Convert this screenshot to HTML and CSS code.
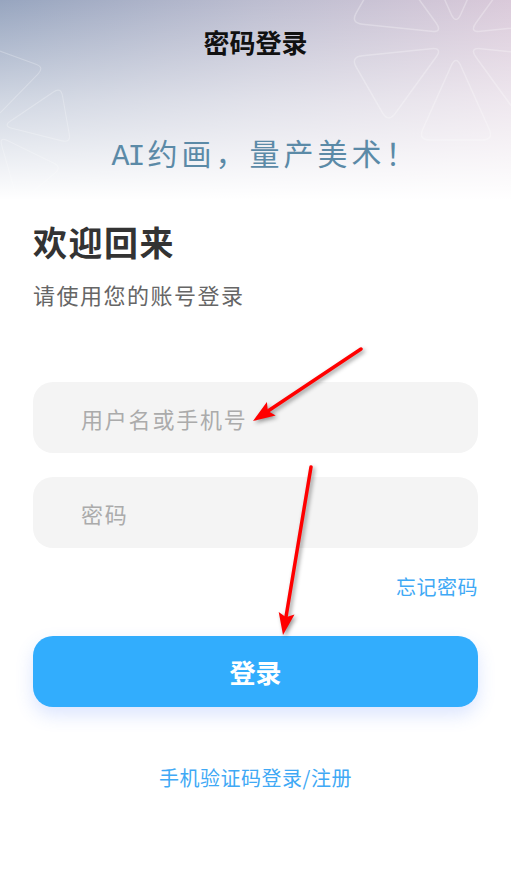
FILE: index.html
```html
<!DOCTYPE html>
<html lang="zh-CN">
<head>
    <meta charset="UTF-8">
    <meta name="viewport" content="width=device-width, initial-scale=1.0">
    <title>密码登录</title>
    <link rel="stylesheet" href="styles.css">
</head>
<body>
    <div class="page">
        <header class="hero">
            <svg class="deco" width="511" height="200" viewBox="0 0 511 200">
                <defs>
                    <path id="petal" d="M4.9 26 L33.1 89 Q38 100 26 100 L-26 100 Q-38 100 -33.1 89 L-4.9 26 Q0 15 4.9 26 Z"/>
                </defs>
                <g class="flower" transform="translate(456 40)">
                    <use href="#petal"/>
                    <use href="#petal" transform="rotate(60)"/>
                    <use href="#petal" transform="rotate(120)"/>
                    <use href="#petal" transform="rotate(180)"/>
                    <use href="#petal" transform="rotate(240)"/>
                    <use href="#petal" transform="rotate(300)"/>
                </g>
                <g class="flower faint" transform="translate(-8 128) scale(0.75) rotate(20)">
                    <use href="#petal"/>
                    <use href="#petal" transform="rotate(60)"/>
                    <use href="#petal" transform="rotate(120)"/>
                    <use href="#petal" transform="rotate(180)"/>
                    <use href="#petal" transform="rotate(240)"/>
                    <use href="#petal" transform="rotate(300)"/>
                </g>
            </svg>
            <div class="nav-title">密码登录</div>
            <div class="slogan"><span class="latin">AI</span>约画，量产美术！</div>
        </header>

        <main class="content">
            <h1 class="welcome">欢迎回来</h1>
            <p class="sub">请使用您的账号登录</p>

            <form class="login-form">
                <input class="field first" type="text" placeholder="用户名或手机号">
                <input class="field" type="password" placeholder="密码">
                <div class="forgot-row">
                    <a class="link" href="#">忘记密码</a>
                </div>
                <button class="btn" type="button">登录</button>
            </form>

            <div class="alt-login">
                <a class="link" href="#">手机验证码登录/注册</a>
            </div>
        </main>

        <!-- annotation arrows -->
        <svg class="arrows" width="511" height="879" viewBox="0 0 511 879">
            <line x1="361" y1="349" x2="268" y2="411"/>
            <polygon points="253,421 275.7,415.5 267.9,411 266.9,402.1"/>
            <line x1="311" y1="467" x2="286" y2="617"/>
            <polygon points="283,635 294.5,614.6 286,617.2 278.7,612"/>
        </svg>
    </div>
</body>
</html>
```

FILE: styles.css
```css
* {
    box-sizing: border-box;
}

body {
    margin: 0;
    background: #fff;
    font-family: "Noto Sans CJK SC", "Noto Sans", sans-serif;
    color: #333;
}

.page {
    position: relative;
    width: 511px;
    min-height: 879px;
    overflow: hidden;
}

.hero {
    position: relative;
    height: 200px;
    background:
        linear-gradient(to bottom, rgba(255, 255, 255, 0) 0%, rgba(255, 255, 255, 0.55) 50%, #fff 100%),
        linear-gradient(to right, #97a5bf 0%, #bcbdd0 50%, #dacada 100%);
    display: flex;
    flex-direction: column;
    align-items: center;
}

.deco {
    position: absolute;
    top: 0;
    left: 0;
}

.flower use {
    fill: none;
    stroke: rgba(255, 255, 255, 0.28);
    stroke-width: 1.5;
}

.flower.faint use {
    stroke: rgba(255, 255, 255, 0.25);
}

.nav-title {
    position: relative;
    margin-top: 25px;
    font-size: 26px;
    line-height: 34px;
    font-weight: 700;
    color: #111;
}

.slogan {
    position: relative;
    margin-top: 75px;
    padding-left: 20px;
    font-size: 30px;
    line-height: 36px;
    color: #5b8aa7;
    letter-spacing: 4px;
}

.slogan .latin {
    font-family: "Liberation Mono", monospace;
    letter-spacing: -2px;
    margin-right: 4px;
}

.content {
    padding: 0 33px;
}

.welcome {
    margin: 22px 0 0;
    font-size: 34px;
    line-height: 40px;
    font-weight: 700;
    color: #333;
    letter-spacing: 1.5px;
}

.sub {
    margin: 17px 0 0;
    font-size: 22px;
    line-height: 30px;
    color: #666;
    letter-spacing: 1.5px;
}

.login-form {
    display: flex;
    flex-direction: column;
}

.field {
    height: 71px;
    margin-top: 24px;
    padding: 0 48px;
    border: none;
    border-radius: 20px;
    background: #f4f4f4;
    font-family: inherit;
    font-size: 22px;
    color: #333;
    letter-spacing: 1.8px;
    outline: none;
}

.field.first {
    margin-top: 73px;
}

.field::placeholder {
    color: #ababab;
}

.forgot-row {
    display: flex;
    justify-content: flex-end;
    margin-top: 24px;
    line-height: 30px;
}

.link {
    color: #3fa9f5;
    font-size: 20px;
    text-decoration: none;
    letter-spacing: 0.5px;
}

.btn {
    margin-top: 34px;
    height: 71px;
    border: none;
    border-radius: 20px;
    background: #32adfd;
    color: #fff;
    font-family: inherit;
    font-size: 26px;
    font-weight: 700;
    box-shadow: 0 8px 18px rgba(60, 110, 250, 0.18);
    cursor: pointer;
}

.alt-login {
    margin-top: 56px;
    text-align: center;
    line-height: 30px;
}

.arrows {
    position: absolute;
    top: 0;
    left: 0;
    pointer-events: none;
    filter: drop-shadow(2px 2px 2px rgba(0, 0, 0, 0.4));
}

.arrows line {
    stroke: #f00;
    stroke-width: 3.5;
    stroke-linecap: round;
}

.arrows polygon {
    fill: #f00;
}
```
